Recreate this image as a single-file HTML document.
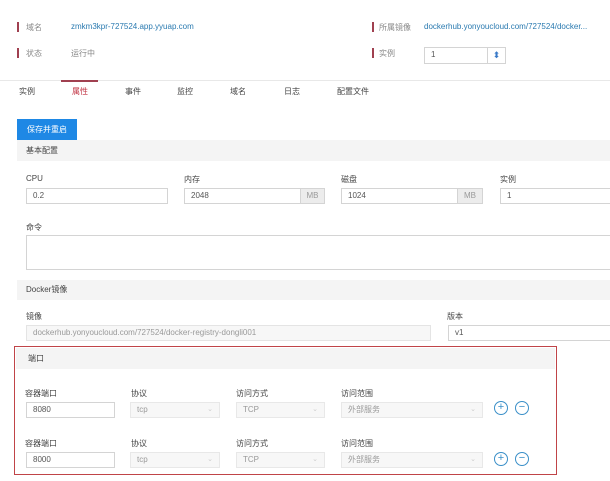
<!DOCTYPE html>
<html><head><meta charset="utf-8"><style>
*{box-sizing:border-box;margin:0;padding:0}
body{width:610px;height:481px;background:#fff;position:relative;overflow:hidden;font-family:"Liberation Sans","Noto Sans CJK SC",sans-serif;font-size:8px;color:#444}
.a{position:absolute;white-space:nowrap}
.bar{position:absolute;width:2px;height:10px;background:#a04050}
.lbl{color:#888}
.blue{color:#2a7ab0}
.in{position:absolute;border:1px solid #d4d4d4;background:#fff;height:16px;line-height:14px;padding-left:6px;color:#555}
.dis{background:#f7f7f7;color:#999}
.add{position:absolute;background:#ececec;border:1px solid #d4d4d4;height:16px;line-height:14px;text-align:center;color:#999}
.sec{position:absolute;background:#f4f4f4;height:21px;line-height:21px;padding-left:9px;color:#444}
.ico{position:absolute;width:14px;height:14px;border:1px solid #3a8fc8;border-radius:50%;color:#3a8fc8;text-align:center;line-height:11px;font-size:11px}
.car{position:absolute;right:6px;top:0;color:#ccc;font-size:7px}
</style></head><body>
<div class="bar" style="left:17px;top:22px"></div><div class="a lbl" style="left:26px;top:22px">域名</div>
<div class="a blue" style="left:71px;top:22px">zmkm3kpr-727524.app.yyuap.com</div>
<div class="bar" style="left:372px;top:22px"></div><div class="a lbl" style="left:379px;top:22px">所属镜像</div>
<div class="a blue" style="left:424px;top:22px">dockerhub.yonyoucloud.com/727524/docker...</div>
<div class="bar" style="left:17px;top:48px"></div><div class="a lbl" style="left:26px;top:48px">状态</div>
<div class="a lbl" style="left:71px;top:48px">运行中</div>
<div class="bar" style="left:372px;top:48px"></div><div class="a lbl" style="left:379px;top:48px">实例</div>
<div class="in" style="left:424px;top:47px;width:64px;height:17px">1</div>
<div class="a" style="left:488px;top:47px;width:18px;height:17px;border:1px solid #d4d4d4;border-left:none;color:#3a7ac8;text-align:center;font-size:9px;line-height:15px">⬍</div>
<div class="a" style="left:0;top:80px;width:610px;height:1px;background:#e8e8e8"></div>
<div class="a" style="left:61px;top:80px;width:37px;height:2px;background:#a04050"></div>
<div class="a" style="left:19px;top:86px">实例</div>
<div class="a" style="left:72px;top:86px;color:#c03040">属性</div>
<div class="a" style="left:125px;top:86px">事件</div>
<div class="a" style="left:177px;top:86px">监控</div>
<div class="a" style="left:230px;top:86px">域名</div>
<div class="a" style="left:284px;top:86px">日志</div>
<div class="a" style="left:337px;top:86px">配置文件</div>
<div class="a" style="left:17px;top:119px;width:60px;height:21px;background:#1e88e5;color:#fff;text-align:center;line-height:21px">保存并重启</div>
<div class="sec" style="left:17px;top:140px;width:593px">基本配置</div>
<div class="a" style="left:26px;top:174px">CPU</div>
<div class="a" style="left:184px;top:174px">内存</div>
<div class="a" style="left:341px;top:174px">磁盘</div>
<div class="a" style="left:500px;top:174px">实例</div>
<div class="in" style="left:26px;top:188px;width:142px">0.2</div>
<div class="in" style="left:184px;top:188px;width:117px">2048</div><div class="add" style="left:300px;top:188px;width:25px">MB</div>
<div class="in" style="left:341px;top:188px;width:117px">1024</div><div class="add" style="left:457px;top:188px;width:26px">MB</div>
<div class="in" style="left:500px;top:188px;width:115px">1</div>
<div class="a" style="left:26px;top:222px">命令</div>
<div class="in" style="left:26px;top:235px;width:590px;height:35px"></div>
<div class="sec" style="left:17px;top:280px;width:593px;height:20px;line-height:20px">Docker镜像</div>
<div class="a" style="left:26px;top:311px">镜像</div>
<div class="a" style="left:447px;top:311px">版本</div>
<div class="in dis" style="left:26px;top:325px;width:405px;border-color:#e4e4e4">dockerhub.yonyoucloud.com/727524/docker-registry-dongli001</div>
<div class="in" style="left:448px;top:325px;width:170px">v1</div>
<div class="a" style="left:14px;top:346px;width:543px;height:129px;border:1.5px solid #c04448"></div>
<div class="sec" style="left:16px;top:348px;width:539px;height:21px;padding-left:12px">端口</div>
<div class="a" style="left:25px;top:388px">容器端口</div><div class="a" style="left:131px;top:388px">协议</div><div class="a" style="left:236px;top:388px">访问方式</div><div class="a" style="left:341px;top:388px">访问范围</div>
<div class="in" style="left:26px;top:402px;width:89px">8080</div>
<div class="in dis" style="left:130px;top:402px;width:90px;border-color:#e8e8e8">tcp<span class="car">⌄</span></div>
<div class="in dis" style="left:236px;top:402px;width:89px;border-color:#e8e8e8">TCP<span class="car">⌄</span></div>
<div class="in dis" style="left:341px;top:402px;width:142px;border-color:#e8e8e8">外部服务<span class="car">⌄</span></div>
<div class="ico" style="left:494px;top:401px">+</div><div class="ico" style="left:515px;top:401px">−</div>
<div class="a" style="left:25px;top:438px">容器端口</div><div class="a" style="left:131px;top:438px">协议</div><div class="a" style="left:236px;top:438px">访问方式</div><div class="a" style="left:341px;top:438px">访问范围</div>
<div class="in" style="left:26px;top:452px;width:89px">8000</div>
<div class="in dis" style="left:130px;top:452px;width:90px;border-color:#e8e8e8">tcp<span class="car">⌄</span></div>
<div class="in dis" style="left:236px;top:452px;width:89px;border-color:#e8e8e8">TCP<span class="car">⌄</span></div>
<div class="in dis" style="left:341px;top:452px;width:142px;border-color:#e8e8e8">外部服务<span class="car">⌄</span></div>
<div class="ico" style="left:494px;top:452px">+</div><div class="ico" style="left:515px;top:452px">−</div>
</body></html>
